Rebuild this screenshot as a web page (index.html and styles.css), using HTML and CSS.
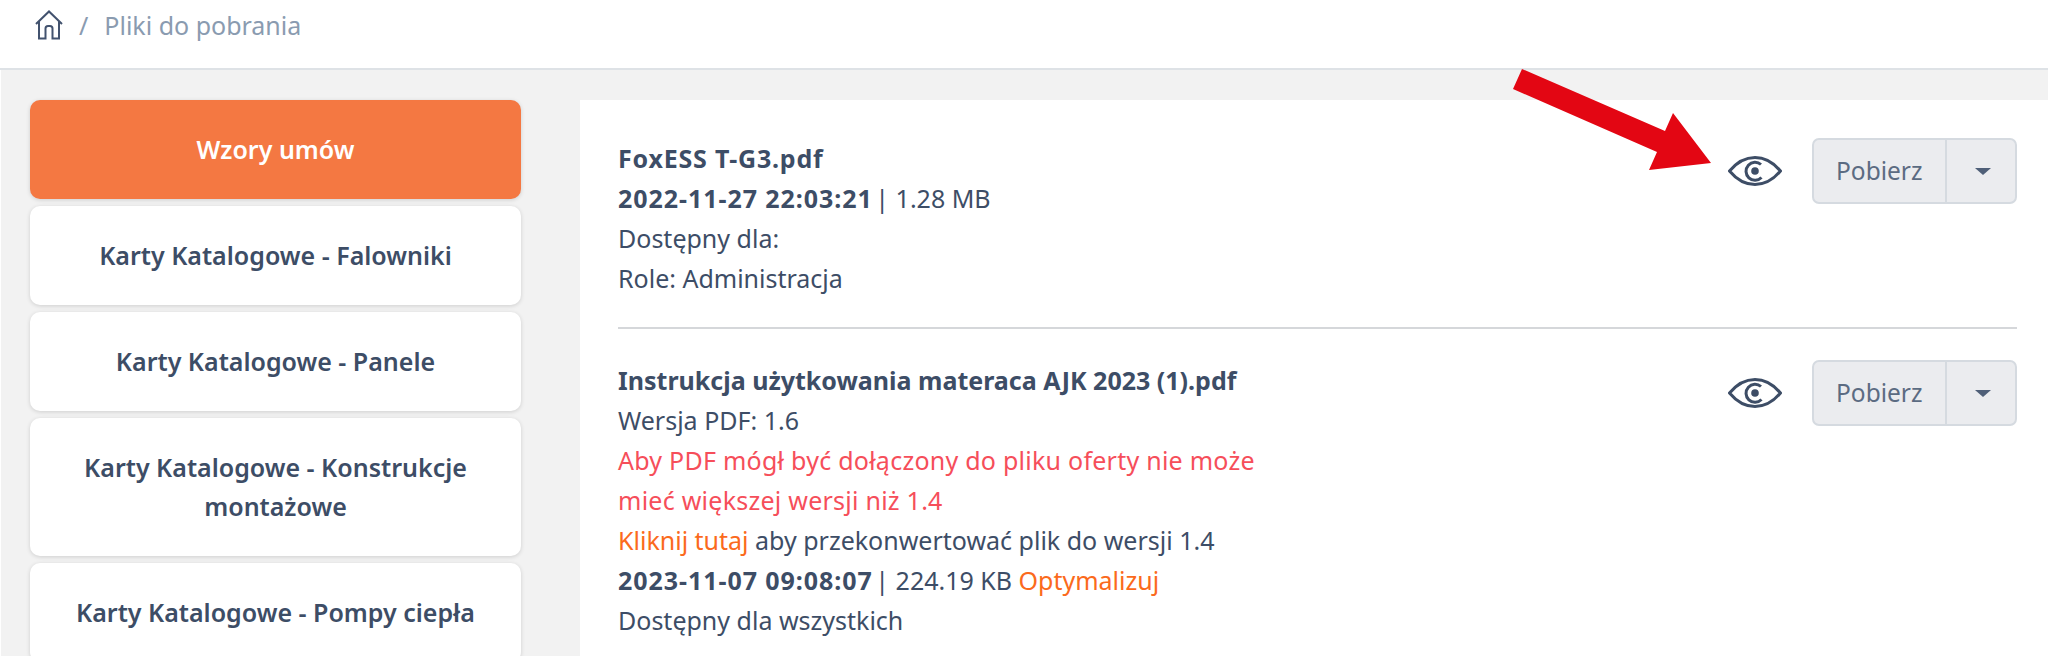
FILE: index.html
```html
<!DOCTYPE html>
<html lang="pl">
<head>
    <meta charset="UTF-8">
    <title>Pliki do pobrania</title>
    <link rel="stylesheet" href="styles.css">
</head>
<body>
<div class="topbar">
    <svg class="home-icon" viewBox="0 0 32 32" width="32" height="32" fill="none" stroke="#42526e" stroke-width="2">
        <path d="M3 15 L16 2.5 L29 15 M6 12.5 V29.5 H12.5 V19.5 Q12.5 17 15 17 H17 Q19.500 17 19.500 19.500 V29.500 H26 V12.500"/>
    </svg>
    <span class="crumb-sep">/</span>
    <span class="crumb">Pliki do pobrania</span>
</div>
<div class="page">
    <div class="sidebar">
        <a class="cat active">Wzory umów</a>
        <a class="cat">Karty Katalogowe - Falowniki</a>
        <a class="cat">Karty Katalogowe - Panele</a>
        <a class="cat">Karty Katalogowe - Konstrukcje montażowe</a>
        <a class="cat">Karty Katalogowe - Pompy ciepła</a>
    </div>
    <div class="files">
        <div class="file">
            <div class="file-info">
                <div><b class="short-name">FoxESS T-G3.pdf</b></div>
                <div><b class="date">2022-11-27 22:03:21</b> | 1.28 MB</div>
                <div>Dostępny dla:</div>
                <div>Role: Administracja</div>
            </div>
            <div class="file-actions">
                <svg class="eye" viewBox="0 0 54 30" width="54" height="30" fill="none" stroke="#3d4d66" stroke-width="3">
                    <path d="M1.500 15 C9 6 18 1.500 27 1.500 C36 1.500 45 6 52.500 15 C45 24 36 28.500 27 28.500 C18 28.500 9 24 1.500 15 Z"/>
                    <path d="M33 8.500 A9 9 0 1 0 33.500 21.500"/>
                    <circle cx="27" cy="15" r="3.800" fill="#3d4d66" stroke="none"/>
                </svg>
                <div class="btn-group">
                    <span class="btn">Pobierz</span>
                    <span class="btn-caret"><i></i></span>
                </div>
            </div>
        </div>
        <div class="file">
            <div class="file-info">
                <div><b>Instrukcja użytkowania materaca AJK 2023 (1).pdf</b></div>
                <div>Wersja PDF: 1.6</div>
                <div class="warn">Aby PDF mógł być dołączony do pliku oferty nie może<br>mieć większej wersji niż 1.4</div>
                <div><a class="link">Kliknij tutaj</a> aby przekonwertować plik do wersji 1.4</div>
                <div><b class="date">2023-11-07 09:08:07</b> | 224.19 KB <a class="link">Optymalizuj</a></div>
                <div>Dostępny dla wszystkich</div>
            </div>
            <div class="file-actions">
                <svg class="eye" viewBox="0 0 54 30" width="54" height="30" fill="none" stroke="#3d4d66" stroke-width="3">
                    <path d="M1.500 15 C9 6 18 1.500 27 1.500 C36 1.500 45 6 52.500 15 C45 24 36 28.500 27 28.500 C18 28.500 9 24 1.500 15 Z"/>
                    <path d="M33 8.500 A9 9 0 1 0 33.500 21.500"/>
                    <circle cx="27" cy="15" r="3.800" fill="#3d4d66" stroke="none"/>
                </svg>
                <div class="btn-group">
                    <span class="btn">Pobierz</span>
                    <span class="btn-caret"><i></i></span>
                </div>
            </div>
        </div>
    </div>
</div>
<svg class="arrow" viewBox="0 0 2048 656" width="2048" height="656">
    <polygon fill="#e30613" points="1522,69 1513,89 1657,152 1649,170 1711,163 1673,113 1665,131"/>
</svg>
</body>
</html>
```

FILE: styles.css
```css
* {
    margin: 0;
    padding: 0;
    box-sizing: border-box;
}
html, body {
    height: 656px;
    overflow: hidden;
}
body {
    position: relative;
    font-family: "Noto Sans", "Open Sans", sans-serif;
    font-size: 25px;
    line-height: 40px;
    color: #3d4d66;
    background: #fff;
}
.topbar {
    display: flex;
    align-items: center;
    height: 70px;
    padding: 0 0 18px 33px;
    border-bottom: 2px solid #dee2e6;
}
.home-icon {
    margin-right: 14px;
}
.crumb-sep {
    margin-right: 16px;
    color: #8a9bb0;
}
.crumb {
    color: #8a9bb0;
}
.page {
    display: flex;
    align-items: flex-start;
    gap: 59px;
    height: 586px;
    margin-left: 1px;
    padding: 30px 0 0 29px;
    background: #f2f2f2;
}
.sidebar {
    display: flex;
    flex-direction: column;
    gap: 7px;
    flex: none;
    width: 491px;
}
.cat {
    display: block;
    padding: 30px;
    border-radius: 10px;
    font-weight: 600;
    line-height: 39px;
    text-align: center;
    background: #fff;
    box-shadow: 0 1px 4px rgba(0, 0, 0, .15);
}
.cat.active {
    color: #fff;
    background: #f47842;
}
.files {
    flex: 1;
    height: 560px;
    padding: 38px 31px 0 38px;
    background: #fff;
}
.file {
    display: flex;
    justify-content: space-between;
    align-items: flex-start;
}
.file + .file {
    margin-top: 31px;
}
.file:first-child {
    padding-bottom: 29px;
    border-bottom: 2px solid #d5d7da;
}
.file-info b {
    font-weight: 700;
}
.file-info .date {
    margin-right: -4px;
    letter-spacing: .95px;
}
.file-info .short-name {
    letter-spacing: .8px;
}
.file-actions {
    display: flex;
    align-items: center;
    gap: 30px;
}
.btn-group {
    display: flex;
    height: 66px;
    border: 2px solid #d5dae0;
    border-radius: 7px;
    font-size: 24.500px;
    color: #5b6b82;
    background: #ebecef;
}
.btn {
    display: flex;
    align-items: center;
    width: 133px;
    padding-left: 22px;
    border-right: 2px solid #d5dae0;
}
.btn-caret {
    display: flex;
    align-items: center;
    justify-content: center;
    width: 68px;
    padding-left: 4px;
}
.btn-caret i {
    width: 0;
    height: 0;
    border-left: 8px solid transparent;
    border-right: 8px solid transparent;
    border-top: 7px solid #4f5f78;
}
.warn {
    color: #f64e5a;
    letter-spacing: .25px;
}
.link {
    color: #fb6a1c;
}
.arrow {
    position: absolute;
    top: 0;
    left: 0;
    pointer-events: none;
}
```
